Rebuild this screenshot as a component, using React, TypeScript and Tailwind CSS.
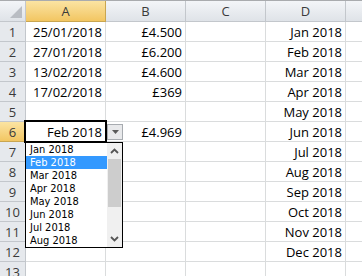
import React from 'react';

const cellFont = { fontFamily: '"Open Sans", "Liberation Sans", sans-serif' };
const listFont = { fontFamily: '"DejaVu Sans Condensed", "DejaVu Sans", sans-serif' };

const data: string[][] = [
  ['25/01/2018', '£4.500', '', 'Jan 2018'],
  ['27/01/2018', '£6.200', '', 'Feb 2018'],
  ['13/02/2018', '£4.600', '', 'Mar 2018'],
  ['17/02/2018', '£369', '', 'Apr 2018'],
  ['', '', '', 'May 2018'],
  ['Feb 2018', '£4.969', '', 'Jun 2018'],
  ['', '', '', 'Jul 2018'],
  ['', '', '', 'Aug 2018'],
  ['', '', '', 'Sep 2018'],
  ['', '', '', 'Oct 2018'],
  ['', '', '', 'Nov 2018'],
  ['', '', '', 'Dec 2018'],
  ['', '', '', ''],
];

const listItems = ['Jan 2018', 'Feb 2018', 'Mar 2018', 'Apr 2018', 'May 2018', 'Jun 2018', 'Jul 2018', 'Aug 2018'];

const headers = ['A', 'B', 'C', 'D', ''];

export default function App() {
  return (
    <div className="relative w-[362px] h-[276px] overflow-hidden bg-white text-[13px] text-black" style={cellFont}>
      <div className="border-t border-[#a9abae] grid grid-cols-[26px_80px_80px_80px_80px_80px] w-[426px]">
        {/* header row */}
        <div className="relative h-[21px] border-r border-b border-[#c3c7cc] bg-gradient-to-b from-[#f3f5f8] to-[#dfe3e8]">
          <svg className="absolute right-[3px] bottom-[3px]" width="12" height="12" viewBox="0 0 12 12">
            <polygon points="12,0 12,12 0,12" fill="#b9bdc3" />
          </svg>
        </div>
        {headers.map((h, i) => (
          <div
            key={i}
            className={
              'h-[21px] border-r border-b text-center pt-[1px] leading-[19px] text-[#3a3a3a] ' +
              (h === 'A'
                ? 'border-[#c9a650] bg-gradient-to-b from-[#fbe4a2] to-[#f2c661]'
                : 'border-[#c3c7cc] bg-gradient-to-b from-[#f3f5f8] to-[#dfe3e8]')
            }
          >
            {h}
          </div>
        ))}
        {data.map((row, ri) => (
          <React.Fragment key={ri}>
            <div
              className={
                'h-[20px] border-r border-b text-center pt-[1px] leading-[18px] text-[#3a3a3a] ' +
                (ri === 5
                  ? 'border-[#c9a650] bg-gradient-to-b from-[#fbe4a2] to-[#f2c661]'
                  : 'border-[#c3c7cc] bg-[#e6e9ed]')
              }
            >
              {ri + 1}
            </div>
            {[...row, ''].map((v, ci) => (
              <div
                key={ci}
                className="h-[20px] border-r border-b border-[#dadcdd] text-right pr-[3px] pt-[1px] leading-[18px] whitespace-nowrap overflow-hidden"
              >
                {v}
              </div>
            ))}
          </React.Fragment>
        ))}
      </div>

      {/* active cell border */}
      <div className="absolute left-[24px] top-[120px] w-[83px] h-[23px] border-2 border-black pointer-events-none" />

      {/* dropdown button */}
      <div className="absolute left-[107px] top-[124px] w-[16px] h-[16px] border border-[#a7abb0] bg-[#e8e9eb] flex items-center justify-center">
        <svg width="7" height="4" viewBox="0 0 7 4">
          <polygon points="0,0 7,0 3.5,4" fill="#5a5a5a" />
        </svg>
      </div>

      {/* dropdown list */}
      <div className="absolute left-[25px] top-[142px] w-[98px] h-[106px] border border-black bg-white flex" style={listFont}>
        <div className="w-[81px] flex flex-col">
          {listItems.map((it, i) => (
            <div
              key={it}
              className={
                'h-[13px] leading-[13px] text-[11px] pl-[4px] whitespace-nowrap ' +
                (i === 1 ? 'bg-[#3399ff] text-white' : 'text-black')
              }
            >
              {it}
            </div>
          ))}
        </div>
        <div className="w-[15px] bg-[#f0f0f0] flex flex-col items-center">
          <div className="h-[16px] flex items-center justify-center">
            <svg width="9" height="6" viewBox="0 0 9 6">
              <polyline points="1,5 4.5,1.5 8,5" fill="none" stroke="#555" strokeWidth="1.8" />
            </svg>
          </div>
          <div className="w-[13px] h-[48px] bg-[#cdcdcd]" />
          <div className="flex-1" />
          <div className="h-[16px] flex items-center justify-center">
            <svg width="9" height="6" viewBox="0 0 9 6">
              <polyline points="1,1 4.5,4.5 8,1" fill="none" stroke="#555" strokeWidth="1.8" />
            </svg>
          </div>
        </div>
      </div>
    </div>
  );
}
